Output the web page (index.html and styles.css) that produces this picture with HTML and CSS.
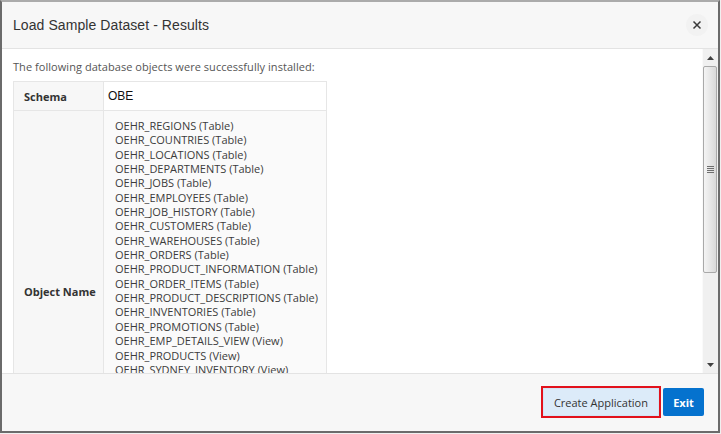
FILE: index.html
```html
<!DOCTYPE html>
<html>
<head>
<meta charset="utf-8">
<link rel="stylesheet" href="styles.css">
</head>
<body>
<div class="dialog">
  <div class="header">
    <div class="title">Load Sample Dataset - Results</div>
    <div class="close">
      <svg width="10" height="10" viewBox="0 0 10 10"><path d="M1.5 1.5 L8.5 8.5 M8.5 1.5 L1.5 8.5" stroke="#3a3a3a" stroke-width="1.5" fill="none"/></svg>
    </div>
  </div>
  <div class="body">
    <div class="main">
      <p class="intro">The following database objects were successfully installed:</p>
      <table class="results">
        <tr class="row-schema">
          <th>Schema</th>
          <td class="val">OBE</td>
        </tr>
        <tr class="row-objects">
          <th>Object Name</th>
          <td class="list-cell">
            <ul class="objects">
              <li>OEHR_REGIONS (Table)</li>
              <li>OEHR_COUNTRIES (Table)</li>
              <li>OEHR_LOCATIONS (Table)</li>
              <li>OEHR_DEPARTMENTS (Table)</li>
              <li>OEHR_JOBS (Table)</li>
              <li>OEHR_EMPLOYEES (Table)</li>
              <li>OEHR_JOB_HISTORY (Table)</li>
              <li>OEHR_CUSTOMERS (Table)</li>
              <li>OEHR_WAREHOUSES (Table)</li>
              <li>OEHR_ORDERS (Table)</li>
              <li>OEHR_PRODUCT_INFORMATION (Table)</li>
              <li>OEHR_ORDER_ITEMS (Table)</li>
              <li>OEHR_PRODUCT_DESCRIPTIONS (Table)</li>
              <li>OEHR_INVENTORIES (Table)</li>
              <li>OEHR_PROMOTIONS (Table)</li>
              <li>OEHR_EMP_DETAILS_VIEW (View)</li>
              <li>OEHR_PRODUCTS (View)</li>
              <li>OEHR_SYDNEY_INVENTORY (View)</li>
            </ul>
          </td>
        </tr>
      </table>
    </div>
    <div class="scrollbar">
      <div class="arrow up"><svg width="7" height="4" viewBox="0 0 7 4"><path d="M0 4 L3.5 0 L7 4 Z" fill="#404040"/></svg></div>
      <div class="thumb"><div class="grip"></div></div>
      <div class="track"></div>
      <div class="arrow down"><svg width="7" height="4" viewBox="0 0 7 4"><path d="M0 0 L7 0 L3.5 4 Z" fill="#404040"/></svg></div>
    </div>
  </div>
  <div class="footer">
    <button class="btn btn-create">Create Application</button>
    <button class="btn btn-exit">Exit</button>
  </div>
</div>
</body>
</html>
```
FILE: styles.css
```css
* { box-sizing: border-box; }
html, body { margin: 0; padding: 0; }
body {
  width: 721px;
  height: 434px;
  overflow: hidden;
  background: #f0f0f0;
  font-family: "Open Sans", "Noto Sans", sans-serif;
}
.dialog {
  width: 720px;
  height: 433px;
  display: flex;
  flex-direction: column;
  border-left: 2px solid #6b6b6b;
  border-right: 2px solid #6b6b6b;
  border-bottom: 2px solid #6b6b6b;
  border-top: 2px solid #ababab;
  background: #f7f7f7;
}
.header {
  height: 47px;
  flex: none;
  display: flex;
  align-items: center;
  justify-content: space-between;
  padding: 0 10px 0 11px;
  border-bottom: 1px solid #e3e3e3;
  background: #f7f7f7;
}
.title {
  font-family: "Liberation Sans", Arial, sans-serif;
  font-size: 14px;
  letter-spacing: 0.08px;
  color: #333;
}
.close {
  width: 22px;
  height: 22px;
  border-radius: 50%;
  background: #f2f2f2;
  display: flex;
  align-items: center;
  justify-content: center;
}
.body {
  flex: 1;
  min-height: 0;
  display: flex;
  background: #fff;
}
.main {
  flex: 1;
  min-width: 0;
  overflow: hidden;
  padding: 10px 0 0 11px;
}
.intro {
  margin: 0 0 6px;
  font-size: 11px;
  line-height: 16px;
  color: #555;
  letter-spacing: 0.05px;
}
.results {
  border-collapse: collapse;
  width: 314px;
  font-size: 11px;
}
.results th, .results td {
  border: 1px solid #e6e6e6;
}
.results th {
  width: 90px;
  background: #f7f7f7;
  text-align: left;
  font-weight: bold;
  color: #333;
  padding: 0 0 0 10px;
  vertical-align: middle;
}
.row-schema th, .row-schema td { height: 29px; }
.val {
  padding: 0 4px;
  font-family: "Liberation Sans", Arial, sans-serif;
  font-size: 12px;
  color: #111;
  background: #fff;
}
.list-cell {
  background: #fafafa;
  padding: 8px 4px 9px 11px;
  vertical-align: top;
}
.objects {
  list-style: none;
  margin: 0;
  padding: 0;
  min-height: 344.4px;
}
.objects li {
  line-height: 14.35px;
  color: #3c3c3c;
  white-space: nowrap;
}
.scrollbar {
  width: 16px;
  flex: none;
  display: flex;
  flex-direction: column;
  background: #f0f0f0;
  border-left: 1px solid #fafafa;
}
.arrow {
  height: 17px;
  flex: none;
  display: flex;
  align-items: center;
  justify-content: center;
}
.thumb {
  height: 207px;
  flex: none;
  margin: 0 1px 0 0;
  border: 1px solid #a9a9a9;
  border-radius: 2px;
  background: linear-gradient(to right, #f4f4f4, #e8e8e8 45%, #d9d9d9);
  display: flex;
  align-items: center;
  justify-content: center;
}
.grip {
  width: 7px;
  height: 7px;
  background: repeating-linear-gradient(to bottom, #6e6e6e 0 1px, transparent 1px 2px);
}
.track { flex: 1; }
.footer {
  height: 58px;
  flex: none;
  border-top: 1px solid #e3e3e3;
  background: #f7f7f7;
  display: flex;
  justify-content: flex-end;
  align-items: flex-start;
  gap: 4px;
  padding: 14px 14px 0 0;
}
.btn {
  height: 28px;
  font-family: "Open Sans", sans-serif;
  font-size: 11px;
  margin: 0;
  cursor: pointer;
}
.btn-create {
  padding: 0 10px;
  background: #dcebf9;
  border: 1px solid #d3e4f5;
  color: #333;
  border-radius: 0;
  outline: 2px solid #e2111b;
}
.btn-exit {
  width: 41px;
  padding: 0;
  background: #0572ce;
  border: none;
  border-radius: 2px;
  color: #fff;
  font-weight: bold;
}
```
